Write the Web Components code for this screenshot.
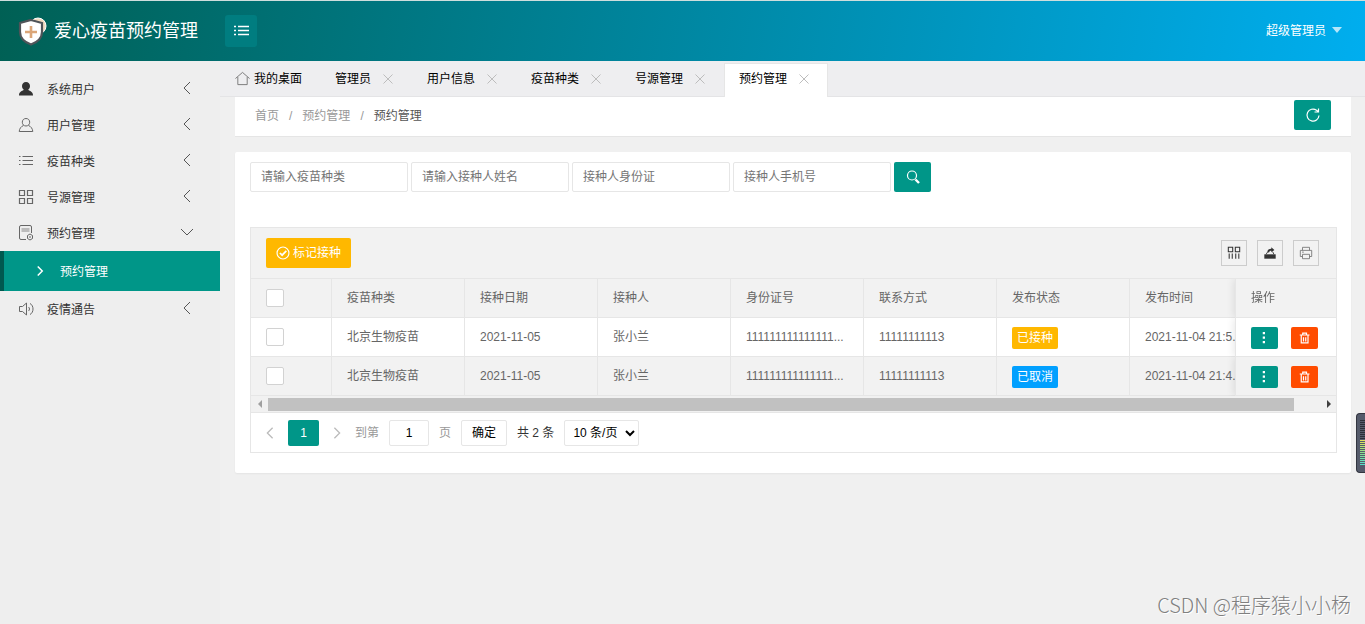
<!DOCTYPE html>
<html lang="zh-CN">
<head>
<meta charset="utf-8">
<title>爱心疫苗预约管理</title>
<style>
html,body{margin:0;min-height:100%}
body{font:12px/20px "Liberation Sans","Noto Sans CJK SC",sans-serif;color:#333;background:#f0f0f0}
</style>
</head>
<body>
<admin-app></admin-app>
<script>
const icons={
 shield:'<circle cx="20" cy="10" r="8" fill="#f3dcc0"/><path d="M13 4l11 3v9c0 6-4 10-11 12.500C6 26 2 22 2 16V7z" fill="#fff" stroke="#505459" stroke-width="2.200"/><path d="M13 10v12M7 16h12" stroke="#dba678" stroke-width="2.600" fill="none"/>',
 menu:'<path d="M5 3.500h11M5 7.500h11M5 11.500h11M1 3.500h2M1 7.500h2M1 11.500h2" stroke-width="1.300"/>',
 user:'<path fill="currentColor" stroke="none" d="M8 1c2.500 0 4 1.700 4 4 0 1.700-.8 3-1.800 3.800.3 1 4.800 1.500 4.800 5.200v.5H1V14c0-3.700 4.500-4.200 4.800-5.200C4.800 8 4 6.700 4 5c0-2.300 1.500-4 4-4z"/>',
 person:'<path d="M8 1.500c2.300 0 3.700 1.600 3.700 3.700S10.300 9 8 9 4.300 7.300 4.300 5.200 5.700 1.500 8 1.500zM5.500 8.500C3 9.500 1.500 11.500 1.200 14.500h13.600c-.3-3-1.800-5-4.300-6"/>',
 list:'<path d="M4.500 3.500H15M4.500 7.500H15M4.500 11.500H15M1 3.500h1.500M1 7.500h1.500M1 11.500h1.500"/>',
 grid:'<path d="M1.500 1.500h5v5h-5zM9.500 1.500h5v5h-5zM1.500 9.500h5v5h-5zM9.500 9.500h5v5h-5z" stroke-width="1.200"/>',
 form:'<path d="M8 14.500H3A1.500 1.500 0 0 1 1.500 13V2A1.500 1.500 0 0 1 3 .5h9A1.500 1.500 0 0 1 13.500 2v6"/><path d="M3.500 3h8v4h-8z" fill="#bbb" stroke="none"/><path d="M9.500 10.500l2.500-1.500 2.500 1.500v3L12 15l-2.500-1.500zM11 12h2"/>',
 sound:'<path d="M1.500 5.500h3l4-3.500v12l-4-3.500h-3zM10.500 6c1.300 1 1.300 3 0 4M12 2.500c4 2 4 9 0 11"/>',
 left:'<path d="M11 2L5 8l6 6"/>',right:'<path d="M5 2l6 6-6 6"/>',down:'<path d="M2 5l6 6 6-6"/>',
 close:'<path d="M2 2l12 12M14 2L2 14" stroke-width="1.300"/>',
 home:'<path d="M.5 8L8 1.500 15.500 8M3 6.500v8h10v-8"/>',
 refresh:'<path d="M14 8.500A6 6 0 1 1 11.500 3.200l2 1.500M13.500 1.500v3.500h-4" stroke-width="1.200"/>',
 search:'<circle cx="7" cy="6.500" r="4.500" stroke-width="1.200"/><path d="M10.500 10.500l3.500 3.500" stroke-width="2.400"/>',
 check:'<circle cx="8" cy="8" r="6.800" stroke-width="1.300"/><path d="M4.500 8l2.500 2.500 4.800-5" stroke-width="2"/>',
 columns:'<path d="M1.500 1.500h5v5h-5zM9.500 1.500h5v5h-5zM2.500 8.500v6M6 8.500v6M10 8.500v6M13.500 8.500v6" stroke-width="1.200"/>',
 export:'<path d="M1.500 9.500h13v5h-13z" fill="currentColor" stroke="none"/><path d="M3.500 9.500l2-3M12.500 9.500l-1.500-3"/><path d="M5 7c0-3 2-4 4.500-4V1.500l3.500 3-3.500 2.500V5.500C8 5.500 7 6 7 7.500z" fill="currentColor" stroke="none"/>',
 print:'<path d="M4 5V1.500h8V5M4 12H1.500V5h13v7H12M4 9.500h8v5H4zM3.500 7h2"/>',
 dots:'<path fill="currentColor" stroke="none" d="M5 0h3v3H5zM5 6h3v3H5zM5 12h3v3H5z"/>',
 trash:'<path d="M1 4h13M5 4V1.500h5V4M3 4.500v10h9v-10M6 7v5.500M9 7v5.500" stroke-width="1.600"/>'
};
const reset='*{box-sizing:border-box}button,input,select{font:inherit;margin:0;outline:0}button{border:0;padding:0;cursor:pointer;display:flex;align-items:center;justify-content:center}a{color:inherit;text-decoration:none}';
function define(name,markup){
 const t=document.createElement('template');
 customElements.define(name,class extends HTMLElement{
  constructor(){super();this.attachShadow({mode:'open'});}
  connectedCallback(){
   if(this.shadowRoot.childNodes.length)return;
   t.innerHTML=`<style>${reset}</style>`+(typeof markup==='function'?markup(this):markup);
   this.shadowRoot.append(t.content.cloneNode(true));
  }
 });
}
define('ui-icon',el=>`<style>:host{display:block;flex:none;width:16px;height:16px}svg{display:block;width:100%;height:100%;stroke-width:var(--stroke,1)}</style>
<svg viewBox="0 0 ${el.getAttribute('name')==='shield'?'30 30':'16 16'}" fill="none" stroke="currentColor" aria-hidden="true">${icons[el.getAttribute('name')]}</svg>`);

define('app-header',`<style>
:host{display:flex;align-items:center;height:61px;border-top:1px solid #cfdedd;padding:0 23px 0 18px;color:#fff;background:linear-gradient(100deg,#006054,#00aeef)}
.logo{width:30px;height:30px}
h1{font-size:18px;line-height:28px;font-weight:400;margin:0 27px 0 6px}
.fold{width:32px;height:32px;border-radius:3px;background:#007d80;color:#fff}
.account{margin-left:auto;display:flex;align-items:center;gap:6px}
.account i{border:5px solid transparent;border-top:6px solid #b5e6fa;border-bottom:0;margin-bottom:3px}
</style><ui-icon class="logo" name="shield"></ui-icon><h1>爱心疫苗预约管理</h1>
<button class="fold" aria-label="折叠菜单"><ui-icon name="menu"></ui-icon></button>
<a class="account" href="#">超级管理员<i></i></a>`);

define('nav-item',el=>`<style>
:host{display:block}a{display:flex;align-items:center;height:36px;padding:0 25px 0 18px}
.ico{margin-right:13px;color:#666}:host([icon=user]) .ico{color:#333}
.label{padding-top:2px}
.arrow{margin-left:auto;margin-bottom:2px;color:#555}
</style><a href="#"><ui-icon class="ico" name="${el.getAttribute('icon')}"></ui-icon><span class="label"><slot></slot></span><ui-icon class="arrow" name="${el.hasAttribute('open')?'down':'left'}"></ui-icon></a><slot name="sub"></slot>`);
define('nav-sub',`<style>:host{display:block}a{display:flex;align-items:center;gap:14px;height:40px;border-left:4px solid #00594f;padding-left:30px;background:#009688;color:#fff}
ui-icon{width:12px;height:12px;--stroke:2}span{padding-top:2px}</style><a href="#"><ui-icon name="right"></ui-icon><span><slot></slot></span></a>`);
define('side-nav',`<style>:host{display:block;width:220px;flex:none;background:#eee;padding-top:10px}</style>
<nav><nav-item icon="user">系统用户</nav-item><nav-item icon="person">用户管理</nav-item><nav-item icon="list">疫苗种类</nav-item><nav-item icon="grid">号源管理</nav-item>
<nav-item icon="form" open>预约管理<nav-sub slot="sub">预约管理</nav-sub></nav-item><nav-item icon="sound">疫情通告</nav-item></nav>`);

define('tab-item',el=>`<style>
:host{display:flex;align-items:center;box-sizing:border-box;height:34px;padding:0 17px 4px 14px;border:1px solid transparent;border-bottom:0;color:#000}
:host([active]){background:#fff;border-color:#e6e6e6}
a{display:flex;align-items:center;gap:4px}
a ui-icon{width:15px;height:15px;color:#777}
button{background:none;margin-left:11px;color:#bbb}button ui-icon{width:12px;height:12px}
</style><a href="#">${el.hasAttribute('home')?'<ui-icon name="home"></ui-icon>':''}<slot></slot></a>${el.hasAttribute('home')?'':'<button aria-label="关闭"><ui-icon name="close"></ui-icon></button>'}`);
define('tab-bar',`<style>:host{display:flex;align-items:flex-end;height:36px;background:#eeeef0;box-shadow:inset 0 -1px #e4e4e6}</style>
<tab-item home>我的桌面</tab-item><tab-item>管理员</tab-item><tab-item>用户信息</tab-item><tab-item>疫苗种类</tab-item><tab-item>号源管理</tab-item><tab-item active>预约管理</tab-item>`);

define('crumb-bar',`<style>
:host{display:flex;align-items:center;justify-content:space-between;height:40px;box-sizing:border-box;margin:0 14px 0 15px;padding:0 20px 3px;background:#fff;border-bottom:1px solid #e5e5e5}
nav{display:flex;gap:10px;padding-top:2px;color:#999}nav a:last-child{color:#555}
button{width:37px;height:30px;border-radius:2px;background:#009688;color:#fff}
</style><nav aria-label="面包屑"><a href="#">首页</a><span>/</span><a href="#">预约管理</a><span>/</span><a href="#">预约管理</a></nav>
<button aria-label="刷新"><ui-icon name="refresh"></ui-icon></button>`);

define('search-bar',`<style>:host{display:block}form{display:flex;gap:3px}
input{width:158px;height:30px;border:1px solid #e6e6e6;border-radius:2px;padding:0 10px;background:#fff;color:#333}
input::placeholder{color:#757575}
button{width:37px;height:30px;border-radius:2px;background:#009688;color:#fff}
</style><form><input aria-label="疫苗种类" placeholder="请输入疫苗种类"><input aria-label="接种人姓名" placeholder="请输入接种人姓名"><input aria-label="接种人身份证" placeholder="接种人身份证"><input aria-label="接种人手机号" placeholder="接种人手机号"><button type="button" aria-label="搜索"><ui-icon name="search"></ui-icon></button></form>`);

define('tool-bar',`<style>
:host{display:flex;align-items:center;gap:10px;height:51px;box-sizing:border-box;padding:0 17px 0 15px;background:#f2f2f2;border-bottom:1px solid #e6e6e6}
.mark{height:30px;padding:0 10px;gap:3px;border-radius:2px;background:#ffb800;color:#fff;margin-right:auto}
.mark ui-icon{width:14px;height:14px}
.tool{width:26px;height:26px;border:1px solid #ccc;background:transparent;color:#333}
.tool ui-icon{width:14px;height:14px}.tool:last-child{color:#777}
</style><button class="mark"><ui-icon name="check"></ui-icon>标记接种</button>
<button class="tool" aria-label="筛选列"><ui-icon name="columns"></ui-icon></button><button class="tool" aria-label="导出"><ui-icon name="export"></ui-icon></button><button class="tool" aria-label="打印"><ui-icon name="print"></ui-icon></button>`);

define('status-badge',`<style>:host{display:inline-block;height:22px;line-height:22px;padding:0 5px;border-radius:2px;background:#ffb800;color:#fff;vertical-align:middle}:host([cancelled]){background:#01a0ff}</style><slot></slot>`);
const row=(time,badge)=>`<tr><td><input type="checkbox" aria-label="选择此行"></td><td>北京生物疫苗</td><td>2021-11-05</td><td>张小兰</td><td>111111111111111...</td><td>11111111113</td><td>${badge}</td><td>${time}</td><td class="fixed"><div><button aria-label="更多"><ui-icon name="dots"></ui-icon></button><button class="del" aria-label="删除"><ui-icon name="trash"></ui-icon></button></div></td></tr>`;
define('record-table',`<style>
:host{display:block;overflow:hidden;color:#666}
table{width:100%;min-width:1113px;table-layout:fixed;border-spacing:0}
th,td{height:39px;padding:0 15px;border:solid #e6e6e6;border-width:0 1px 1px 0;text-align:left;font-weight:400;white-space:nowrap;background:#fff}
th,tr:nth-child(2n) td{background:#f2f2f2}
th{width:133px}.sel{width:81px}
th.fixed{width:101px}.fixed{position:sticky;right:0;border-left-width:1px;border-right:0;box-shadow:-1px 0 8px rgba(0,0,0,.1);clip-path:inset(0 0 0 -8px)}
input{appearance:none;display:block;width:18px;height:18px;border:1px solid #d2d2d2;border-radius:2px;background:#fff}
.fixed div{display:flex;gap:13px;padding-top:2px}
button{width:27px;height:22px;border-radius:2px;background:#009688;color:#fff}button ui-icon{width:12px;height:12px}.del{background:#ff4c00}
status-badge{margin-top:2px}
</style><table><thead><tr><th class="sel"><input type="checkbox" aria-label="全选"></th><th>疫苗种类</th><th>接种日期</th><th>接种人</th><th>身份证号</th><th>联系方式</th><th>发布状态</th><th>发布时间</th><th class="fixed">操作</th></tr></thead>
<tbody>${row('2021-11-04 21:5...','<status-badge>已接种</status-badge>')}${row('2021-11-04 21:4...','<status-badge cancelled>已取消</status-badge>')}</tbody></table>`);

define('scroll-track',`<style>:host{display:flex;align-items:center;height:17px;box-sizing:border-box;padding:0 5px 0 7px;background:#f1f1f1;border-bottom:1px solid #e6e6e6}
i{border:4px solid transparent}.l{border-left:0;border-right-color:#a0a0a0}.r{border-right:0;border-left-color:#404040}
.track{display:flex;flex:1;margin:0 7px 0 6px}.thumb{flex:39;height:13px;background:#c1c1c1}.rest{flex:1}</style><i class="l"></i><div class="track"><div class="thumb"></div><div class="rest"></div></div><i class="r"></i>`);

define('page-nav',`<style>
:host{display:flex;align-items:center;gap:10px;height:39px;padding:0 11px;color:#999}
.step{width:16px;height:26px;background:none;color:#bbb}.step ui-icon{width:14px;height:14px;--stroke:1.500}
.cur{width:31px;height:26px;border-radius:2px;background:#009688;color:#fff}
.steps{display:flex;gap:10px}
input,.ok,select{height:26px;border:1px solid #e6e6e6;border-radius:2px;background:#fff;color:#000}
input{width:40px;text-align:center;padding:0}.ok{width:46px}select{width:75px;padding:0 0 0 4px}
label{display:flex;align-items:center;gap:10px}.total{color:#333}
</style><div class="steps"><button class="step" aria-label="上一页"><ui-icon name="left"></ui-icon></button><button class="cur">1</button><button class="step" aria-label="下一页"><ui-icon name="right"></ui-icon></button></div>
<label>到第<input value="1">页</label><button class="ok">确定</button><span class="total">共 2 条</span><select aria-label="每页条数"><option>10 条/页</option></select>`);

define('record-panel',`<style>:host{display:block;margin:15px 14px 0 15px;padding:10px 14px 20px 15px;background:#fff;border-radius:2px;box-shadow:0 1px 2px rgba(0,0,0,.05)}
.grid{margin-top:35px;border:1px solid #e6e6e6}</style><search-bar></search-bar><div class="grid"><tool-bar></tool-bar><record-table></record-table><scroll-track></scroll-track><page-nav></page-nav></div>`);

define('level-meter',`<style>:host{display:block;box-sizing:border-box;width:9px;height:60px;border:1px solid #32353f;border-right:0;border-radius:4px 0 0 4px;background:#555b6b;padding:6px 0 6px 3px}
div{height:46px;background:repeating-linear-gradient(transparent 0 1px,#555b6b 1px 2px),linear-gradient(#2c2f38 0 20px,#e8e25a 20px,#8fe08a 32px,#4fe0cf)}</style><div></div>`);

define('admin-app',`<style>
:host{display:flex;flex-direction:column;min-height:100vh;position:relative}
.body{display:flex;flex:1}main{flex:1;min-width:0}
app-header,tab-bar{box-sizing:border-box}side-nav{box-sizing:border-box}
level-meter{position:absolute;right:0;top:413px}
.mark{position:absolute;right:14px;bottom:4px;font:300 20px/30px "Noto Sans CJK SC",sans-serif;color:#808080;text-shadow:1px 1px #fff}
</style><app-header></app-header><div class="body"><side-nav></side-nav><main><tab-bar></tab-bar><crumb-bar></crumb-bar><record-panel></record-panel></main></div>
<level-meter></level-meter><span class="mark">CSDN @程序猿小小杨</span>`);
</script>
</body>
</html>
